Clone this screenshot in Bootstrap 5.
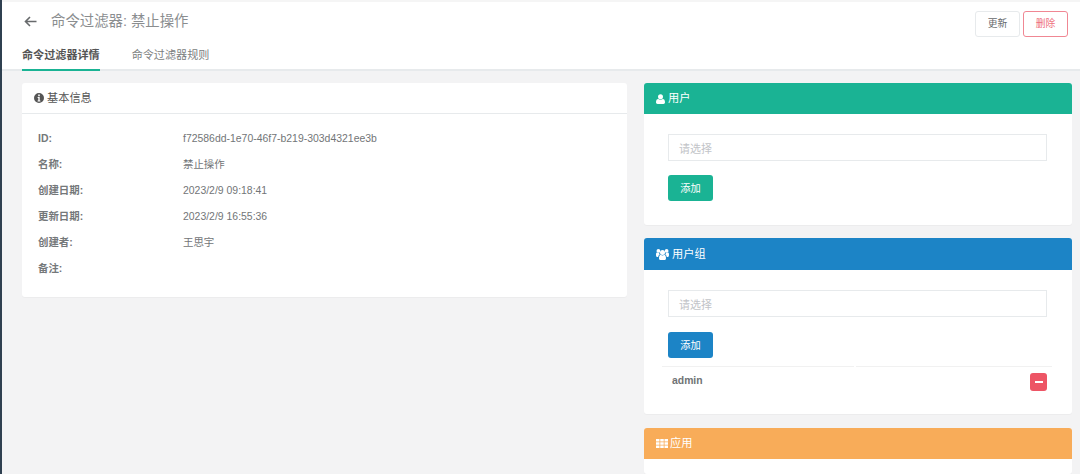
<!DOCTYPE html>
<html lang="zh"><head><meta charset="utf-8">
<link href="https://cdn.jsdelivr.net/npm/bootstrap@5.3.0/dist/css/bootstrap.min.css" rel="stylesheet">
<style>
html,body{height:474px;overflow:hidden}
body{background:#f3f3f4;font-family:"Liberation Sans","Noto Sans CJK SC",sans-serif;font-size:10.45px;color:#727577;border-left:2px solid #2f4050}
.top-bar{background:#fff;border-top:2px solid #f5f5f5;border-bottom:2px solid #e7eaec;height:71px;padding:0 12px 0 20px}
.back-ic{width:13px;height:11px;margin:0 14px 0 2px;color:#676a6c}
.title-line{padding-top:9px}
.page-title{font-size:14.4px;font-weight:400;margin:0;color:#8a8d8f;line-height:20px}
.tool-btn{width:45px;height:26px;padding:0;font-size:9.8px;line-height:24px;border-radius:3px;background:#fff}
.tool-plain{border:1px solid #e7eaec;color:#676a6c}
.tool-danger{border:1px solid #f08793;color:#ee6f7d;margin-left:3px}
.tab-row{margin-top:11px;gap:32px}
.tab-item{font-size:11.1px;line-height:14px;padding-bottom:5px;color:#7b7e80;margin-bottom:-2px;height:23px;border-bottom:2px solid transparent}
.tab-on{color:#555;font-weight:700;border-bottom-color:#1ab394}
.page-body{padding:12px 8px 0 20px;gap:17px}
.left-col{width:605px;flex:none}
.right-col{width:428px;flex:none}
.box{background:#fff;border:0;border-radius:3px;box-shadow:0 1px 1px rgba(0,0,0,.03)}
.box-head{height:31px;padding:0 12px;display:flex;align-items:center;gap:3px;font-size:11.2px;color:#555;border-bottom:1px solid #e7eaec;border-radius:3px 3px 0 0}
.info-list{padding:12px 16px 16px;height:183px}
.info-row{height:26px;line-height:26px;display:flex}
.info-key{width:145px;font-weight:700;color:#75787a}
.head-green{background:#1ab394;color:#fff;border:0}
.head-blue{background:#1c84c6;color:#fff;border:0}
.head-orange{background:#f8ac59;color:#fff;border:0;gap:2px}
.gap-one{margin-bottom:13px}
.gap-two{margin-bottom:14px}
.panel-body{padding:20px 25px 20px 24px}
.picker{height:27px;border:1px solid #e7eaec;line-height:28px;padding:0 10px;color:#c2c4c8;font-size:11px;background:#fff}
.add-btn{display:block;width:45px;height:26px;padding:1px 0 0;margin-top:14px;border:0;border-radius:3px;color:#fff;font-size:10.2px}
.add-green{background:#1ab394}.add-blue{background:#1c84c6;margin-top:15px}
.member-row{display:flex;gap:2px;margin:8px -5px 0 -6px;font-weight:700;color:#707375}
.member-cell{border-top:1px solid #f1f1f1;height:47px;flex:1 1 0}
.member-name{display:block;line-height:15px;font-size:10.4px;padding:6px 0 0 10px}
.member-act{display:flex;justify-content:flex-end;padding:6px 5px 0 0}
.minus-btn{width:17px;height:18px;background:#ed5565;border-radius:3px;border:0;padding:0;display:flex;align-items:center;justify-content:center}
.minus-btn i{display:block;width:8px;height:2.500px;background:#fff}
.ic{flex:none;fill:currentColor}
</style></head>
<body>
<header class="top-bar">
  <div class="d-flex justify-content-between title-line">
    <div class="d-flex align-items-center" style="height:20px">
      <svg class="back-ic" viewBox="0 0 13 11" fill="none" stroke="currentColor" stroke-width="1.6"><path d="M12.500 5.500H1.500M6 1 1.500 5.500 6 10"/></svg>
      <h1 class="page-title">命令过滤器: 禁止操作</h1>
    </div>
    <div class="d-flex">
      <button class="tool-btn tool-plain">更新</button>
      <button class="tool-btn tool-danger">删除</button>
    </div>
  </div>
  <div class="d-flex tab-row">
    <div class="tab-item tab-on">命令过滤器详情</div>
    <div class="tab-item">命令过滤器规则</div>
  </div>
</header>
<main class="d-flex page-body">
  <section class="left-col">
    <div class="box">
      <div class="box-head">
        <svg class="ic" width="10" height="10" viewBox="0 0 10 10"><path fill-rule="evenodd" d="M5 0a5 5 0 1 1 0 10A5 5 0 0 1 5 0ZM4.200 1.600v1.600h1.600V1.600ZM3.600 4v1h.7v2.400h-.7v1h2.800v-1h-.7V4Z"/></svg>
        <span>基本信息</span>
      </div>
      <div class="info-list">
        <div class="info-row"><span class="info-key">ID:</span><span>f72586dd-1e70-46f7-b219-303d4321ee3b</span></div>
        <div class="info-row"><span class="info-key">名称:</span><span>禁止操作</span></div>
        <div class="info-row"><span class="info-key">创建日期:</span><span>2023/2/9 09:18:41</span></div>
        <div class="info-row"><span class="info-key">更新日期:</span><span>2023/2/9 16:55:36</span></div>
        <div class="info-row"><span class="info-key">创建者:</span><span>王思宇</span></div>
        <div class="info-row"><span class="info-key">备注:</span><span></span></div>
      </div>
    </div>
  </section>
  <section class="right-col">
    <div class="box gap-one">
      <div class="box-head head-green">
        <svg class="ic" width="9" height="10" viewBox="0 0 9 10"><circle cx="4.500" cy="2.700" r="2.500"/><path d="M0 8.300C0 6.200.9 5 2.200 5c.6.500 1.400.8 2.300.8S6.200 5.500 6.800 5C8.100 5 9 6.200 9 8.300 9 9.400 8.300 10 7.400 10H1.600C.7 10 0 9.400 0 8.300Z"/></svg>
        <span>用户</span>
      </div>
      <div class="panel-body" style="height:111px">
        <div class="picker">请选择</div>
        <button class="add-btn add-green">添加</button>
      </div>
    </div>
    <div class="box gap-two">
      <div class="box-head head-blue" style="height:32px">
        <svg class="ic" width="13" height="11" viewBox="0 0 13 11"><circle cx="6.500" cy="3.400" r="2.500"/><circle cx="2.400" cy="1.900" r="1.900"/><circle cx="10.600" cy="1.900" r="1.900"/><path d="M3 9.200C3 7 3.800 5.800 4.800 5.800c.5.400 1 .6 1.700.6s1.200-.2 1.700-.6c1 0 1.800 1.200 1.800 3.400 0 1.100-.6 1.800-1.500 1.800H4.500C3.600 11 3 10.300 3 9.200Z"/><path d="M0 5.700C0 4.200.4 3.500 1 3.500c.4.300.8.500 1.300.5.300 0 .5 0 .8-.1 0 .5.200 1.100.6 1.600C2.700 6 2.300 6.900 2.200 8H1C.3 8 0 6.900 0 5.700Zm13 0c0-1.500-.4-2.200-1-2.200-.4.300-.8.500-1.300.5-.3 0-.5 0-.8-.1 0 .5-.2 1.100-.6 1.600.9.500 1.300 1.400 1.400 2.500H12c.7 0 1-1.100 1-2.300Z"/></svg>
        <span>用户组</span>
      </div>
      <div class="panel-body" style="height:144px">
        <div class="picker">请选择</div>
        <button class="add-btn add-blue">添加</button>
        <div class="member-row">
          <div class="member-cell"><span class="member-name">admin</span></div>
          <div class="member-cell member-act"><button class="minus-btn" aria-label="删除"><i></i></button></div>
        </div>
      </div>
    </div>
    <div class="box">
      <div class="box-head head-orange">
        <svg class="ic" width="12" height="9" viewBox="0 0 12 9"><path d="M0 0h3.500v2.500H0zM4.250 0h3.500v2.500h-3.500zM8.500 0H12v2.500H8.500zM0 3.250h3.500v2.500H0zM4.250 3.250h3.500v2.500h-3.500zM8.500 3.250H12v2.500H8.500zM0 6.500h3.500V9H0zM4.250 6.500h3.500V9h-3.500zM8.500 6.500H12V9H8.500z"/></svg>
        <span>应用</span>
      </div>
      <div style="height:15px"></div>
    </div>
  </section>
</main>
</body></html>
